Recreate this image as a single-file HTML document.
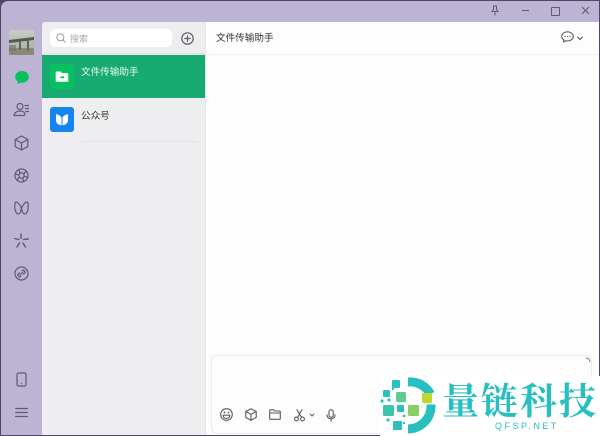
<!DOCTYPE html>
<html lang="zh">
<head>
<meta charset="utf-8">
<style>
html,body{margin:0;padding:0;width:600px;height:436px;overflow:hidden;background:#8f8a9a}
body{font-family:"Liberation Sans","Noto Sans CJK SC",sans-serif;position:relative}
.abs,svg{position:absolute}
#win{position:absolute;left:1px;top:1px;width:598px;height:434px;background:#bdb4d4;border-top-left-radius:7px;overflow:hidden}
#bg{position:absolute;left:0;top:0;width:600px;height:436px;background:#4e4768}
.t{position:absolute;white-space:nowrap;line-height:14px}
svg.i{fill:none;stroke:#5e5a6e;stroke-width:1.2;stroke-linecap:round;stroke-linejoin:round}
svg.g{fill:none;stroke:#5b5b5b;stroke-width:1.1;stroke-linecap:round;stroke-linejoin:round}
</style>
</head>
<body>
<div id="bg"></div>
<div id="win"></div>

<!-- list panel -->
<div class="abs" style="left:42px;top:22px;width:163px;height:413px;background:#eeeef0;border-top-left-radius:3px"></div>
<div class="abs" style="left:42px;top:53px;width:163px;height:2px;background:#e4e4e6"></div>
<!-- chat panel -->
<div class="abs" style="left:205px;top:22px;width:394px;height:413px;background:#fdfdfd;border-left:1px solid #e6e6e8;box-sizing:border-box"></div>
<div class="abs" style="left:206px;top:54px;width:393px;height:1px;background:#efeff0"></div>

<!-- avatar -->
<svg style="left:9px;top:30px" width="25" height="25" viewBox="0 0 25 25">
<defs><linearGradient id="sky" x1="0" y1="0" x2="0" y2="1"><stop offset="0" stop-color="#c9cdc8"/><stop offset="1" stop-color="#a8a89a"/></linearGradient></defs>
<rect width="25" height="25" rx="2" fill="url(#sky)"/>
<rect y="18" width="25" height="7" rx="1" fill="#8a8777"/>
<path d="M0 10L25 7V10L0 13Z" fill="#4f5a52"/>
<path d="M10 11h2v9h-2zM18 9.500h2v11h-2z" fill="#5e6660"/>
<path d="M0 15h7v6H0z" fill="#77796a" opacity=".7"/>
</svg>

<!-- sidebar icons -->
<svg style="left:14px;top:70px" width="16" height="16" viewBox="0 0 16 16"><path d="M8 1C4.200 1 1.200 3.400 1.200 6.900c0 2.100 1.100 3.800 2.800 4.800L3.600 14.300 6.400 12.700C6.900 12.800 7.500 12.800 8 12.800c3.800 0 6.800-2.500 6.800-5.900S11.800 1 8 1z" fill="#07c160"/></svg>
<svg class="i" style="left:13px;top:102px" width="17" height="16" viewBox="0 0 17 16"><circle cx="7" cy="4.500" r="3"/><path d="M1.200 13.500c0-2.600 2.600-4.500 5.800-4.500 1.600 0 3 .4 4 1.200 1.200 1 1.200 3.300-.5 3.300H2.200c-.6 0-1-.3-1-1z"/><path d="M12 3.500h3.500M12.500 6.500h3M13 9.500h2.500"/></svg>
<svg class="i" style="left:14px;top:135px" width="15" height="16" viewBox="0 0 15 16"><path d="M7.500 1L13.800 4.500V11.500L7.500 15 1.200 11.500V4.500Z"/><path d="M1.200 4.500L7.500 8 13.800 4.500M7.500 8V15"/></svg>
<svg class="i" style="left:14px;top:168px" width="15" height="15" viewBox="0 0 15 15"><circle cx="7.500" cy="7.500" r="6.500"/><circle cx="7.500" cy="7.500" r="2.600"/><path d="M5 1.500L6 5.300M12.300 3.200L9.700 5.900M13.800 9.200L10 8.500M9.800 13.500L8.600 9.900M2.800 12L5.400 9.300M1.200 6L5 6.900"/></svg>
<svg class="i" style="left:14px;top:201px" width="15" height="15" viewBox="0 0 15 15"><path d="M7.500 7C6 4 4 1 2 1 .8 1 .8 3 .8 6c0 4 1.700 7 3.700 7C6 13 7 10 7.500 7 8 10 9 13 10.500 13c2 0 3.700-3 3.700-7 0-3 0-5-1.200-5-2 0-4 3-5.500 6z"/></svg>
<svg class="i" style="left:14px;top:233px;stroke-width:1.400" width="15" height="15" viewBox="0 0 15 15"><path d="M7 1V5.500M9 10L11.500 14M5.500 10L3 14M9.500 6.500L14.500 6M5 6.500L.8 5.500"/></svg>
<svg class="i" style="left:14px;top:266px" width="15" height="15" viewBox="0 0 15 15"><circle cx="7.500" cy="7.500" r="6.500"/><path d="M8.200 4.700a1.700 1.700 0 0 1 2.400 2.400L9.500 8.200M6.800 10.300a1.700 1.700 0 0 1-2.400-2.400L5.500 6.800M6 9L9 6"/></svg>
<svg class="i" style="left:16px;top:372px" width="11" height="15" viewBox="0 0 11 15"><rect x="1" y="1" width="9" height="13" rx="1.500"/><path d="M5.500 11.500h.01"/></svg>
<svg class="i" style="left:15px;top:407px" width="13" height="11" viewBox="0 0 13 11"><path d="M.7 1.500h11.600M.7 5.500h11.600M.7 9.500h11.600"/></svg>

<!-- search -->
<div class="abs" style="left:50px;top:29px;width:122px;height:18px;background:#fff;border-radius:5px"></div>
<svg class="abs" style="left:56px;top:33px;fill:none;stroke:#9a9a9a;stroke-width:1;stroke-linecap:round" width="10" height="10" viewBox="0 0 10 10"><circle cx="4.400" cy="4.400" r="3.500"/><path d="M7 7L9 9"/></svg>
<div class="t" style="left:70px;top:33px;font-size:9px;line-height:12px;color:#a9a9ad">搜索</div>
<svg class="abs" style="left:181px;top:32px;fill:none;stroke:#5f5f63;stroke-width:1.200;stroke-linecap:round" width="13" height="13" viewBox="0 0 13 13"><circle cx="6.500" cy="6.500" r="5.700"/><path d="M6.500 3.800v5.400M3.800 6.500h5.400"/></svg>

<!-- rows -->
<div class="abs" style="left:42px;top:55px;width:163px;height:43px;background:#17ab72"></div>
<div class="abs" style="left:50px;top:64px;width:24px;height:25px;background:#07c160;border-radius:3px"></div>
<svg style="left:55px;top:70px" width="14" height="13" viewBox="0 0 14 13"><path d="M1.500 1.500h4.200l1.200 1.500h5.600a.8.800 0 0 1 .8.800v7.200a.8.800 0 0 1-.8.800H1.500a.8.800 0 0 1-.8-.8V2.300a.8.800 0 0 1 .8-.8z" fill="#fff"/><path d="M5 7.300h3.200" stroke="#07c160" stroke-width="1.300"/><path d="M7.600 5.500L9.600 7.300 7.600 9.100z" fill="#07c160"/></svg>
<div class="t" style="left:81px;top:65px;font-size:9.600px;color:#e9f7f1;margin-top:1px">文件传输助手</div>

<div class="abs" style="left:50px;top:107px;width:24px;height:25px;background:#1485ee;border-radius:3px"></div>
<svg style="left:55px;top:113px" width="14" height="13" viewBox="0 0 14 13"><path d="M1 1.200C3.500 1.500 5.800 2.800 6.500 4.500V12.300C4 12 1 10.500 1 7.500zM13 1.200C10.500 1.500 8.200 2.800 7.500 4.500V12.300C10 12 13 10.500 13 7.500z" fill="#fff"/></svg>
<div class="t" style="left:81px;top:110px;font-size:9.600px;color:#333">公众号</div>
<div class="abs" style="left:81px;top:141px;width:116px;height:1px;background:#e2e2e4"></div>

<!-- chat header -->
<div class="t" style="left:216px;top:32px;font-size:9.600px;color:#333">文件传输助手</div>
<svg class="g" style="left:561px;top:31px" width="13" height="12" viewBox="0 0 13 12"><path d="M6.500 .8C3.300.8.700 2.800.700 5.400c0 1.500.8 2.700 2.100 3.500L2.500 11 4.800 9.800C5.400 9.900 5.900 10 6.500 10c3.200 0 5.800-2 5.800-4.600S9.700.8 6.500.8z"/><path d="M4 5.400h.3M6.400 5.400h.3M8.800 5.400h.3"/></svg>
<svg class="g" style="left:577px;top:36px;stroke-width:1.200" width="6" height="5" viewBox="0 0 6 5"><path d="M.7 1.200L3 3.500 5.300 1.200"/></svg>

<!-- window controls -->
<svg style="left:490px;top:5px;fill:none;stroke:#5e5a6e;stroke-width:1" width="10" height="11" viewBox="0 0 10 11"><path d="M3 1h4M3.500 1v3.500L2 6.500h6L6.500 4.500V1M5 6.500V10.500"/></svg>
<div class="abs" style="left:522px;top:10px;width:7px;height:1px;background:#5e5a6e"></div>
<div class="abs" style="left:551px;top:7px;width:7px;height:7px;border:1px solid #5e5a6e;border-radius:1px"></div>
<svg style="left:581px;top:6px;fill:none;stroke:#5e5a6e;stroke-width:1" width="9" height="9" viewBox="0 0 9 9"><path d="M1 1L8 8M8 1L1 8"/></svg>

<!-- composer -->
<div class="abs" style="left:211px;top:355px;width:381px;height:79px;box-sizing:border-box;background:#fdfdfd;border:1px solid #ececee;border-radius:6px"></div>
<svg class="g" style="left:220px;top:408px" width="13" height="13" viewBox="0 0 13 13"><circle cx="6.500" cy="6.500" r="5.800"/><path d="M3.200 7.200h6.600c0 2-1.500 3.300-3.300 3.300S3.200 9.200 3.200 7.200z"/><path d="M4.500 4.500h.01M8.500 4.500h.01" stroke-width="1.800"/></svg>
<svg class="g" style="left:245px;top:408px" width="12" height="13" viewBox="0 0 12 13"><path d="M6 .8L11.200 3.500V9.500L6 12.200.8 9.500V3.500Z"/><path d="M.8 3.500L6 6.300 11.200 3.500M6 6.300V12.200"/></svg>
<svg class="g" style="left:269px;top:409px" width="12" height="11" viewBox="0 0 12 11"><path d="M.7 1.500A.8.800 0 0 1 1.500.700h3L5.700 2h4.800a.8.800 0 0 1 .8.800v6.700a.8.800 0 0 1-.8.800H1.500a.8.800 0 0 1-.8-.8zM.7 4h10.600"/></svg>
<svg class="g" style="left:294px;top:409px" width="11" height="13" viewBox="0 0 11 13"><path d="M3 .7L7.500 8.500M8 .7L3.500 8.500"/><circle cx="2.500" cy="10" r="1.900"/><circle cx="8.500" cy="10" r="1.900"/></svg>
<svg class="g" style="left:309px;top:413px;stroke-width:1" width="6" height="4" viewBox="0 0 6 4"><path d="M1 1L3 3 5 1"/></svg>
<svg class="g" style="left:326px;top:409px" width="10" height="13" viewBox="0 0 10 13"><rect x="3" y=".7" width="4.200" height="7.500" rx="2.100"/><path d="M1 5.800c0 2.400 1.700 4 4 4s4-1.600 4-4M5 9.800V12.300"/></svg>
<svg style="left:585px;top:357px;fill:none;stroke:#7b7b7b;stroke-width:1" width="6" height="6" viewBox="0 0 6 6"><path d="M1 1C3 1 5 2.500 5 5"/></svg>

<!-- watermark -->
<div class="abs" style="left:380px;top:376px;width:220px;height:60px;background:#fff"></div>
<svg style="left:380px;top:376px" width="60" height="60" viewBox="0 0 60 60">
<path d="M28 1.500A27.500 27.500 0 0 1 54.500 16L46 19.500A18.500 18.500 0 0 0 28 10.500Z" fill="#27bfc0"/>
<path d="M55.500 28.500A27.500 27.500 0 0 1 28 57.500V48.500A18.500 18.500 0 0 0 46.500 28.500Z" fill="#27bfc0"/>
<path d="M15 26L27 26 36 38 46 26" fill="none" stroke="#cfe9d8" stroke-width=".8"/>
<rect x="16" y="16" width="10" height="10" rx="1.500" fill="#5fca8f"/>
<rect x="42" y="17" width="10" height="10" rx="1.500" fill="#bcd92e"/>
<rect x="28" y="29" width="11" height="11" rx="1.500" fill="#87cf62"/>
<rect x="3" y="29" width="11" height="11" rx="1.500" fill="#3cc3ab"/>
<rect x="12" y="4" width="8" height="8" rx="1" fill="#2cbfbf"/>
<rect x="3" y="14" width="7" height="7" rx="1" fill="#2cbfbf"/>
<rect x="17" y="29" width="7" height="7" rx="1" fill="#2cbfbf"/>
<rect x="13" y="45" width="9" height="9" rx="1" fill="#2cbfbf"/>
<circle cx="2" cy="25" r="1.600" fill="#2cbfbf"/><circle cx="9" cy="24" r="1.600" fill="#2cbfbf"/><circle cx="13" cy="13" r="1.200" fill="#2cbfbf"/><circle cx="24" cy="40" r="1.400" fill="#2cbfbf"/><circle cx="8" cy="44" r="1.600" fill="#2cbfbf"/><circle cx="24" cy="47" r="1.200" fill="#2cbfbf"/>
</svg>
<div class="t" style="left:442px;top:378px;font-family:'Noto Serif CJK SC',serif;font-size:37px;line-height:40px;color:#27bfc0;letter-spacing:2px;font-weight:700">量链科技</div>
<div class="t" style="left:495px;top:421px;font-size:9px;line-height:11px;color:#27bfc0;letter-spacing:2.500px">QFSP.NET</div>
</body>
</html>
